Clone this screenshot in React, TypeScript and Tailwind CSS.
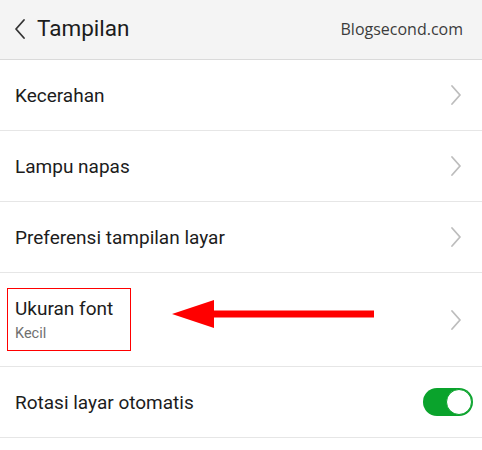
import React from 'react';

interface SettingRow {
  label: string;
  hint?: string;
  kind: 'link' | 'toggle';
  highlight?: boolean;
}

const rows: SettingRow[] = [
  { label: 'Kecerahan', kind: 'link' },
  { label: 'Lampu napas', kind: 'link' },
  { label: 'Preferensi tampilan layar', kind: 'link' },
  { label: 'Ukuran font', hint: 'Kecil', kind: 'link', highlight: true },
  { label: 'Rotasi layar otomatis', kind: 'toggle' },
];

const Chevron: React.FC = () => (
  <svg width="12" height="22" viewBox="0 0 12 22" fill="none" className="shrink-0">
    <path d="M2 2 L10 11 L2 20" stroke="#bdbdbd" strokeWidth="1.8" strokeLinecap="round" strokeLinejoin="round" />
  </svg>
);

const Toggle: React.FC = () => (
  <div className="flex h-[28px] w-[50px] items-center justify-end rounded-full bg-[#0aa32c] px-[1px]">
    <div className="h-[26px] w-[26px] rounded-full border border-[#0aa32c] bg-white" />
  </div>
);

// red pointer drawn next to the highlighted row
const PointerArrow: React.FC = () => (
  <svg width="202" height="28" viewBox="0 0 202 28" className="absolute left-[172px] top-[27px]">
    <polygon points="0,14 42,0 42,28" fill="#ff0000" />
    <rect x="40" y="10.5" width="162" height="7" fill="#ff0000" />
  </svg>
);

const App: React.FC = () => {
  return (
    <div className="h-[450px] w-[482px] bg-white font-['Roboto',sans-serif] text-[#1c1c1c]">
      <header className="flex h-[60px] items-center justify-between border-b border-[#dadada] bg-[#f4f4f4] pb-[2px] pl-[14px] pr-[19px]">
        <div className="flex items-center gap-[11px]">
          <svg width="12" height="22" viewBox="0 0 12 22" fill="none">
            <path d="M10 2 L2 11 L10 20" stroke="#333" strokeWidth="1.8" strokeLinecap="round" strokeLinejoin="round" />
          </svg>
          <span className="text-[22.5px] leading-none">Tampilan</span>
        </div>
        <span className="font-['Open_Sans',sans-serif] text-[16px] text-[#3c3c3c]">Blogsecond.com</span>
      </header>

      <ul>
        {rows.map((row) => (
          <li
            key={row.label}
            className={`relative flex items-center justify-between border-b border-[#e6e6e6] pl-[15px] pr-[20px] ${
              row.hint ? 'h-[94px]' : 'h-[71px]'
            }`}
          >
            {row.highlight ? (
              <div className="-ml-[8px] flex h-[63px] w-[124px] flex-col justify-center border-[1.5px] border-[#ff0000] pl-[7px]">
                <span className="text-[19px] leading-[25px]">{row.label}</span>
                <span className="mt-[3px] text-[14.5px] leading-[20px] text-[#707070]">{row.hint}</span>
              </div>
            ) : (
              <span className="pt-[2px] text-[19px]">{row.label}</span>
            )}
            {row.highlight && <PointerArrow />}
            {row.kind === 'toggle' ? (
              <div className="-mr-[11px]">
                <Toggle />
              </div>
            ) : (
              <Chevron />
            )}
          </li>
        ))}
      </ul>
    </div>
  );
};

export default App;
